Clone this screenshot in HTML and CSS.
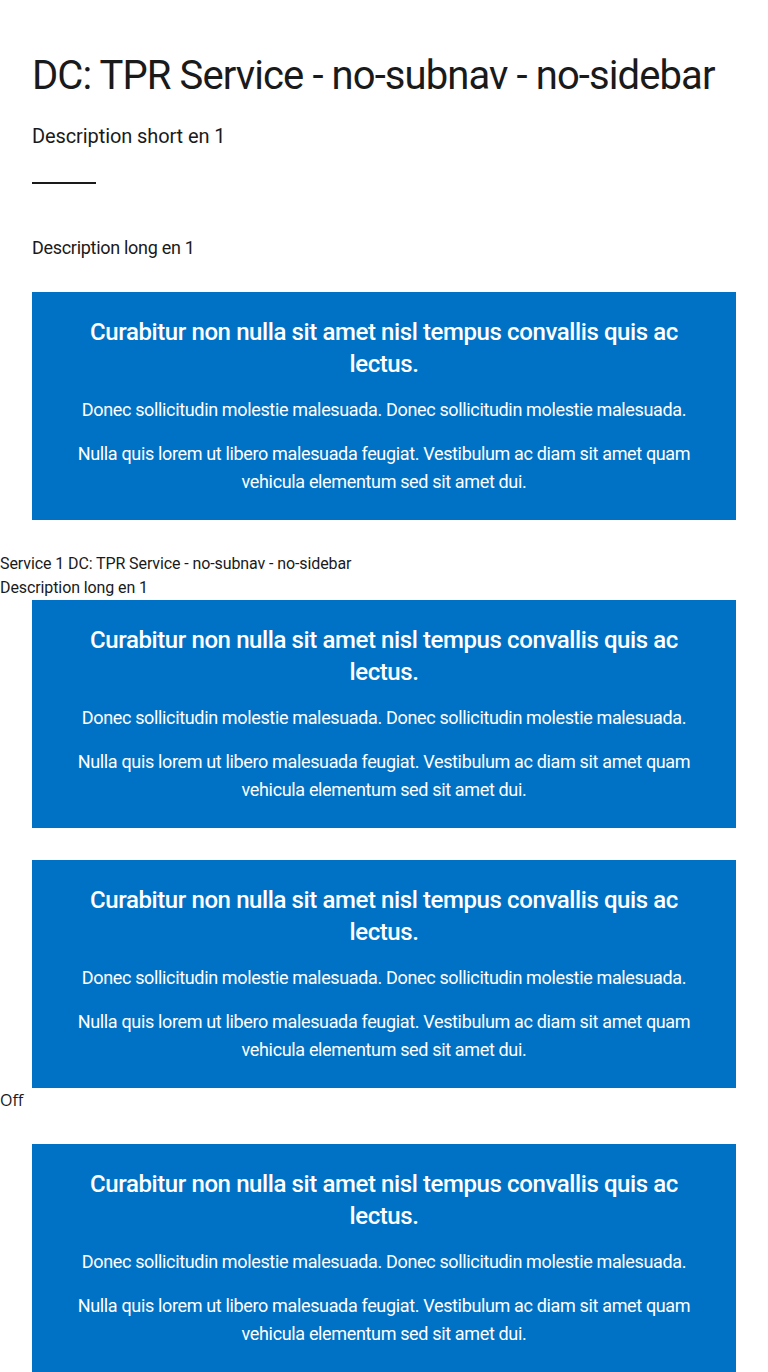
FILE: index.html
```html
<!DOCTYPE html>
<html lang="en">
<head>
<meta charset="utf-8">
<title>DC: TPR Service - no-subnav - no-sidebar</title>
<link rel="stylesheet" href="styles.css">
</head>
<body>
<main class="page">
  <header class="intro">
    <h1 class="title">DC: TPR Service - no-subnav - no-sidebar</h1>
    <p class="short">Description short en 1</p>
    <hr class="rule">
    <p class="long">Description long en 1</p>
  </header>
  <section class="promo promo-first">
    <h2 class="promo-title">Curabitur non nulla sit amet nisl tempus convallis quis ac lectus.</h2>
    <p class="promo-text">Donec sollicitudin molestie malesuada. Donec sollicitudin molestie malesuada.</p>
    <p class="promo-text">Nulla quis lorem ut libero malesuada feugiat. Vestibulum ac diam sit amet quam vehicula elementum sed sit amet dui.</p>
  </section>
  <div class="raw">
    <div class="raw-line">Service 1 DC: TPR Service - no-subnav - no-sidebar</div>
    <div class="raw-line">Description long en 1</div>
  </div>
  <section class="promo">
    <h2 class="promo-title">Curabitur non nulla sit amet nisl tempus convallis quis ac lectus.</h2>
    <p class="promo-text">Donec sollicitudin molestie malesuada. Donec sollicitudin molestie malesuada.</p>
    <p class="promo-text">Nulla quis lorem ut libero malesuada feugiat. Vestibulum ac diam sit amet quam vehicula elementum sed sit amet dui.</p>
  </section>
  <section class="promo promo-gap">
    <h2 class="promo-title">Curabitur non nulla sit amet nisl tempus convallis quis ac lectus.</h2>
    <p class="promo-text">Donec sollicitudin molestie malesuada. Donec sollicitudin molestie malesuada.</p>
    <p class="promo-text">Nulla quis lorem ut libero malesuada feugiat. Vestibulum ac diam sit amet quam vehicula elementum sed sit amet dui.</p>
  </section>
  <div class="raw raw-off">
    <div class="raw-line off">Off</div>
  </div>
  <section class="promo promo-last">
    <h2 class="promo-title">Curabitur non nulla sit amet nisl tempus convallis quis ac lectus.</h2>
    <p class="promo-text">Donec sollicitudin molestie malesuada. Donec sollicitudin molestie malesuada.</p>
    <p class="promo-text">Nulla quis lorem ut libero malesuada feugiat. Vestibulum ac diam sit amet quam vehicula elementum sed sit amet dui.</p>
  </section>
</main>
</body>
</html>
```
FILE: styles.css
```css
html, body {
  margin: 0;
  padding: 0;
  background: #ffffff;
}
body {
  font-family: Roboto, "Liberation Sans", sans-serif;
  color: #1a1a1a;
}
.page {
  display: flex;
  flex-direction: column;
}
.intro {
  padding: 52px 32px 0;
}
.title {
  margin: 0;
  font-size: 40px;
  line-height: 48px;
  font-weight: 400;
  letter-spacing: -0.9px;
  white-space: nowrap;
}
.short {
  margin: 22px 0 0;
  font-size: 20px;
  line-height: 28px;
  letter-spacing: -0.1px;
}
.rule {
  margin: 32px 0 0;
  width: 64px;
  height: 2px;
  border: 0;
  background: #1a1a1a;
}
.long {
  margin: 50px 0 0;
  font-size: 18px;
  line-height: 28px;
  letter-spacing: -0.3px;
}
.promo {
  margin: 0 32px;
  background: #0072c6;
  color: #ffffff;
  text-align: center;
  padding: 24px 44px 24px;
  height: 228px;
  box-sizing: border-box;
}
.promo-first {
  margin-top: 30px;
}
.promo-gap {
  margin-top: 32px;
}
.promo-last {
  margin-top: 32px;
}
.promo-title {
  margin: 0;
  font-size: 24px;
  line-height: 32px;
  font-weight: 500;
  letter-spacing: -0.4px;
}
.promo-text {
  margin: 16px 0 0;
  font-size: 18px;
  line-height: 28px;
  letter-spacing: -0.35px;
}
.raw {
  margin-top: 32px;
  font-size: 16px;
  line-height: 24px;
  letter-spacing: -0.1px;
}
.raw-off {
  margin-top: 0;
  font-family: "Open Sans", sans-serif;
  letter-spacing: 0;
}
```
